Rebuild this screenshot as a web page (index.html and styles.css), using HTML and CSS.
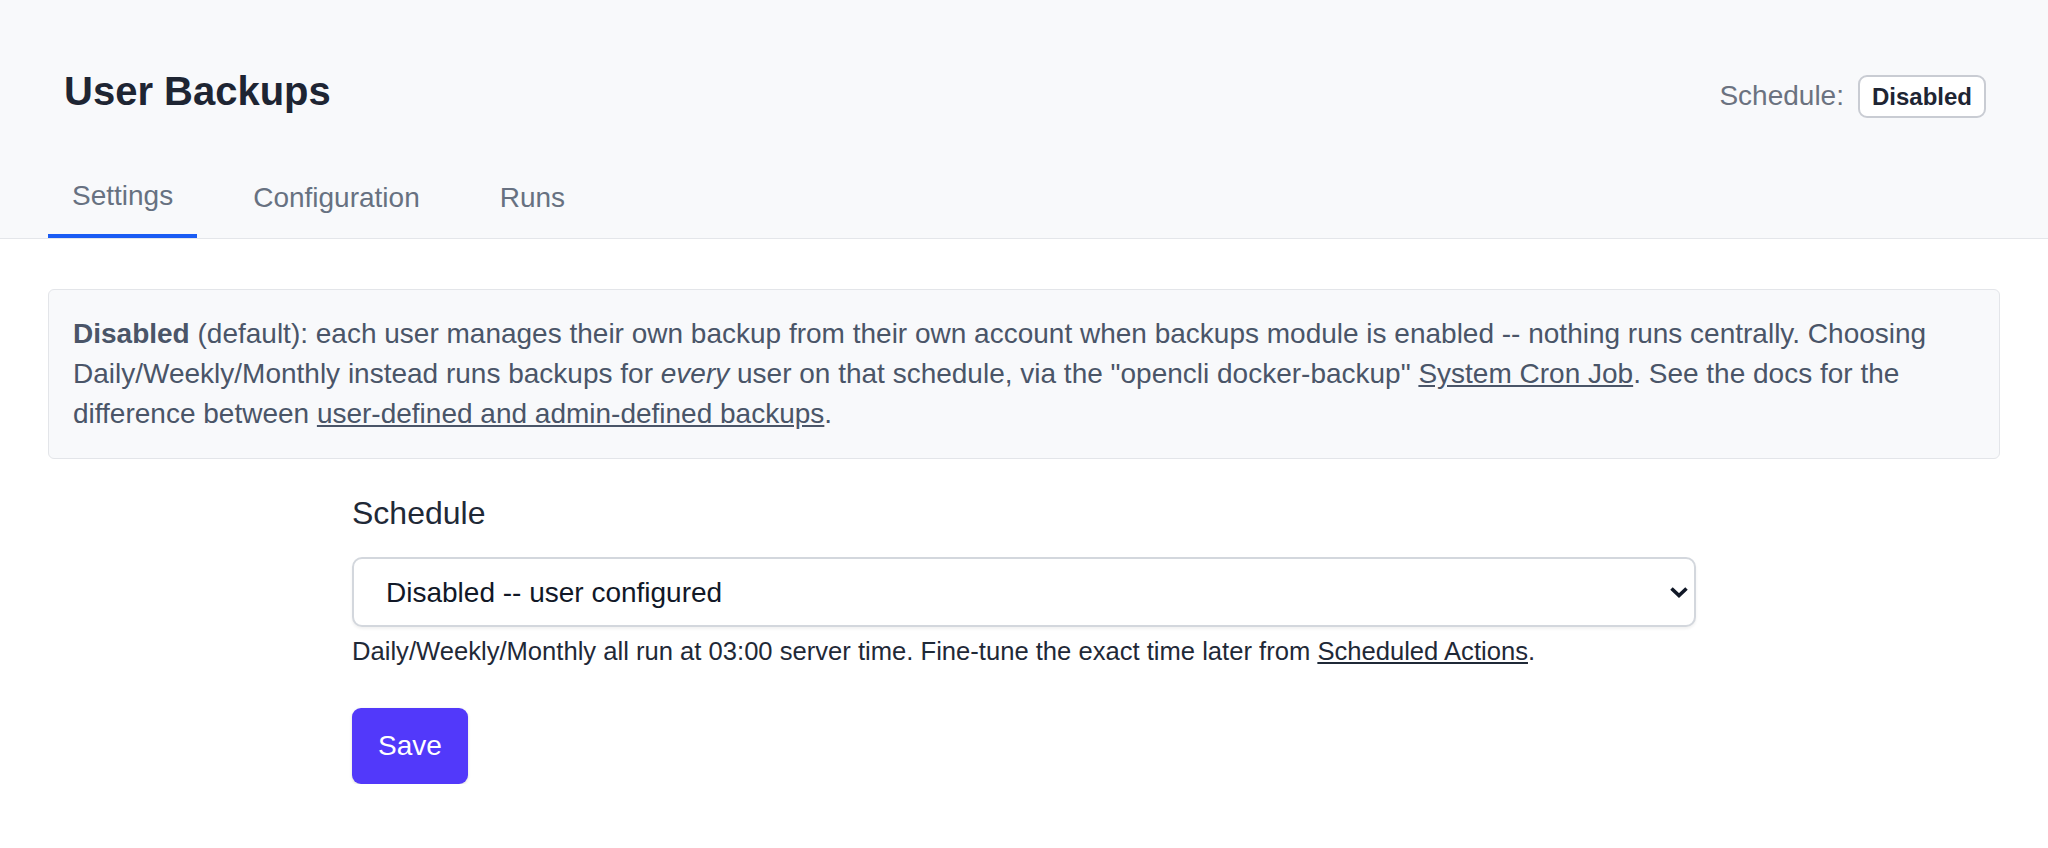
FILE: index.html
```html
<!DOCTYPE html>
<html lang="en">
<head>
  <meta charset="UTF-8" />
  <meta name="viewport" content="width=device-width, initial-scale=1.0"/>
  <title>User Backups</title>
  <link rel="stylesheet" href="styles.css">
</head>
<body>

  <!-- Page header -->
  <header class="page-head">
    <div class="head-row">
      <h1 class="page-title">User Backups</h1>
      <div class="schedule-status">
        <span class="status-label">Schedule:</span>
        <span class="badge">Disabled</span>
      </div>
    </div>

    <nav class="tabs">
      <a href="#" class="tab active">Settings</a>
      <a href="#" class="tab">Configuration</a>
      <a href="#" class="tab">Runs</a>
    </nav>
  </header>

  <main class="content">
    <div class="notice">
      <p><strong>Disabled</strong> (default): each user manages their own backup from their own account when backups module is enabled -- nothing runs centrally. Choosing Daily/Weekly/Monthly instead runs backups for <em>every</em> user on that schedule, via the "opencli docker-backup" <a href="#">System Cron Job</a>. See the docs for the difference between <a href="#">user-defined and admin-defined backups</a>.</p>
    </div>

    <form class="settings-form" onsubmit="return false">
      <label class="field-label" for="schedule">Schedule</label>
      <div class="select-wrap">
        <select id="schedule" name="schedule">
          <option>Disabled -- user configured</option>
          <option>Daily</option>
          <option>Weekly</option>
          <option>Monthly</option>
        </select>
        <svg class="chevron" width="20" height="12" viewBox="0 0 20 12" aria-hidden="true">
          <polyline points="2.5,2.5 10,9.5 17.5,2.5" fill="none" stroke="#111827" stroke-width="3.6" stroke-linejoin="miter"/>
        </svg>
      </div>
      <p class="help">Daily/Weekly/Monthly all run at 03:00 server time. Fine-tune the exact time later from <a href="#">Scheduled Actions</a>.</p>

      <button type="submit" class="btn-save">Save</button>
    </form>
  </main>

</body>
</html>
```

FILE: styles.css
```css
* {
  margin: 0;
  padding: 0;
  box-sizing: border-box;
  font-family: 'Liberation Sans', Arial, sans-serif;
}

body {
  background: #fff;
  color: #1f2937;
}

a {
  color: inherit;
}

/* Header */
.page-head {
  background: #f8f9fb;
  border-bottom: 1px solid #e4e6ea;
  padding-top: 67px;
}

.head-row {
  display: flex;
  justify-content: space-between;
  align-items: baseline;
  padding: 0 62px 0 64px;
}

.page-title {
  font-size: 40px;
  line-height: 48px;
  font-weight: 700;
  color: #1e2533;
}

.schedule-status {
  display: flex;
  align-items: baseline;
  gap: 14px;
}

.status-label {
  font-size: 28px;
  color: #6b7280;
}

.badge {
  font-size: 24px;
  line-height: 31px;
  font-weight: 700;
  color: #1e2533;
  background: #fff;
  border: 2px solid #c9ccd3;
  border-radius: 9px;
  padding: 4px 12px;
}

/* Tabs */
.tabs {
  display: flex;
  align-items: flex-end;
  gap: 32px;
  padding-left: 48px;
  margin-top: 58px;
}

.tab {
  font-size: 28px;
  line-height: 40px;
  color: #677181;
  text-decoration: none;
  padding: 0 24px 18px;
  border-bottom: 2px solid transparent;
}

.tab.active {
  border-bottom: 4px solid #1a5cf4;
}

/* Content */
.content {
  padding: 0 48px;
}

.notice {
  margin-top: 50px;
  background: #f8f9fb;
  border: 1px solid #e3e5e9;
  border-radius: 6px;
  padding: 24px;
  font-size: 28px;
  line-height: 40px;
  color: #4a5568;
}

.settings-form {
  max-width: 1344px;
  margin: 30px auto 0;
}

.field-label {
  display: block;
  font-size: 32px;
  line-height: 48px;
  color: #1f2937;
  margin-bottom: 20px;
}

.select-wrap {
  position: relative;
}

.select-wrap select {
  appearance: none;
  -webkit-appearance: none;
  width: 100%;
  height: 70px;
  padding: 0 32px;
  font-size: 28px;
  color: #111827;
  background: #fff;
  border: 2px solid #d3d7dd;
  border-radius: 10px;
  box-shadow: 0 2px 3px rgba(0,0,0,0.06);
  outline: none;
}

.chevron {
  position: absolute;
  right: 7px;
  top: 29px;
  pointer-events: none;
}

.help {
  margin-top: 6px;
  font-size: 25.6px;
  line-height: 36px;
  color: #1f2937;
}

.btn-save {
  margin-top: 39px;
  background: #5239fa;
  color: #fff;
  border: none;
  border-radius: 9px;
  font-size: 28px;
  line-height: 40px;
  padding: 18px 26px;
  cursor: pointer;
  box-shadow: 0 1px 3px rgba(0,0,0,0.15);
}

.btn-save:hover {
  background: #4329e8;
}
```
